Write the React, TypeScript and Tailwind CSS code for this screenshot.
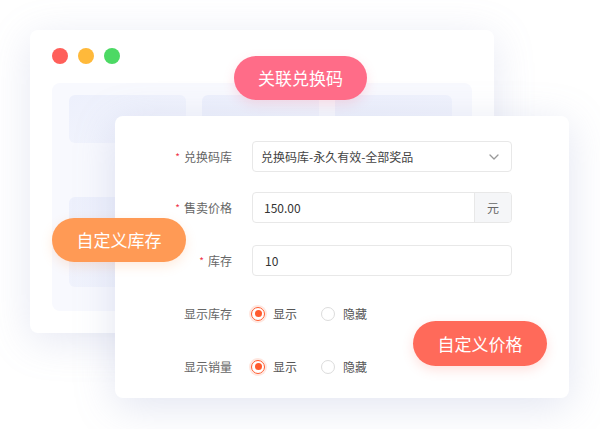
import React from "react";

const font = { fontFamily: '"Noto Sans CJK SC", "Noto Sans", sans-serif' };

function Label({ text, required }: { text: string; required?: boolean }) {
  return (
    <div className="w-[117px] shrink-0 flex items-center justify-end text-[12px] text-[#666] leading-none">
      {required && <span className="text-[#F0354B] mr-[4px] text-[10px]">*</span>}
      <span>{text}</span>
    </div>
  );
}

function Radio({ checked, text }: { checked?: boolean; text: string }) {
  return (
    <div className="flex items-center">
      {checked ? (
        <div className="w-[14px] h-[14px] rounded-full border-[1.5px] border-[#FF5B2E] flex items-center justify-center shadow-[0_0_0_2px_rgba(255,91,46,0.15)]">
          <div className="w-[7px] h-[7px] rounded-full bg-[#FF5B2E]" />
        </div>
      ) : (
        <div className="w-[14px] h-[14px] rounded-full border border-[#DCDCDC] bg-white" />
      )}
      <span className="ml-[8px] text-[12px] text-[#555] leading-none">{text}</span>
    </div>
  );
}

export default function App() {
  return (
    <div className="relative w-[600px] h-[429px] bg-white overflow-hidden" style={font}>
      {/* back window */}
      <div className="absolute left-[30px] top-[30px] w-[464px] h-[303px] rounded-[8px] bg-white shadow-[0_8px_40px_rgba(140,150,200,0.22)] flex flex-col">
        <div className="flex items-center gap-[10px] pl-[22px] pt-[18px]">
          <div className="w-[16px] h-[16px] rounded-full bg-[#FF5F5A]" />
          <div className="w-[16px] h-[16px] rounded-full bg-[#FFB93A]" />
          <div className="w-[16px] h-[16px] rounded-full bg-[#4CD964]" />
        </div>
        <div className="ml-[22px] mt-[19px] w-[420px] h-[228px] rounded-[8px] bg-[#F8F9FE] pt-[12px] pl-[17px] flex flex-col gap-[54px]">
          <div className="flex gap-[16px]">
            <div className="w-[117px] h-[48px] rounded-[6px] bg-gradient-to-br from-[#EDF0FC] to-[#F3F5FD]" />
            <div className="w-[117px] h-[48px] rounded-[6px] bg-gradient-to-br from-[#EDF0FC] to-[#F3F5FD]" />
            <div className="w-[117px] h-[48px] rounded-[6px] bg-gradient-to-br from-[#EDF0FC] to-[#F3F5FD]" />
          </div>
          <div className="flex gap-[16px]">
            <div className="w-[117px] h-[90px] rounded-[6px] bg-gradient-to-br from-[#EDF0FC] to-[#F3F5FD]" />
            <div className="w-[117px] h-[90px] rounded-[6px] bg-gradient-to-br from-[#EDF0FC] to-[#F3F5FD]" />
            <div className="w-[117px] h-[90px] rounded-[6px] bg-gradient-to-br from-[#EDF0FC] to-[#F3F5FD]" />
          </div>
        </div>
      </div>

      {/* front panel */}
      <div className="absolute left-[115px] top-[116px] w-[454px] h-[282px] rounded-[8px] bg-white shadow-[0_8px_40px_rgba(140,150,200,0.25)] pt-[25px] flex flex-col">
        <div className="flex h-[31px]">
          <Label text="兑换码库" required />
          <div className="ml-[20px] w-[260px] h-[31px] rounded-[4px] border border-[#E8E8E8] flex items-center justify-between pl-[8px] pr-[12px]">
            <span className="text-[12px] text-[#444] leading-none">兑换码库-永久有效-全部奖品</span>
            <svg width="10" height="6" viewBox="0 0 10 6" fill="none">
              <path d="M1 1l4 4 4-4" stroke="#999" strokeWidth="1.3" strokeLinecap="round" strokeLinejoin="round" />
            </svg>
          </div>
        </div>
        <div className="flex h-[31px] mt-[20px]">
          <Label text="售卖价格" required />
          <div className="ml-[20px] w-[260px] h-[31px] rounded-[4px] border border-[#E8E8E8] flex overflow-hidden">
            <div className="flex-1 flex items-center pl-[11px] text-[12px] text-[#333] leading-none">150.00</div>
            <div className="w-[37px] bg-[#F5F6F8] border-l border-[#E8E8E8] flex items-center justify-center text-[12px] text-[#666] leading-none">元</div>
          </div>
        </div>
        <div className="flex h-[31px] mt-[22px]">
          <Label text="库存" required />
          <div className="ml-[20px] w-[260px] h-[31px] rounded-[4px] border border-[#E8E8E8] flex items-center pl-[12px] text-[12px] text-[#333] leading-none">10</div>
        </div>
        <div className="flex h-[31px] mt-[22px]">
          <Label text="显示库存" />
          <div className="ml-[19px] flex items-center gap-[24px]">
            <Radio checked text="显示" />
            <Radio text="隐藏" />
          </div>
        </div>
        <div className="flex h-[31px] mt-[22px]">
          <Label text="显示销量" />
          <div className="ml-[19px] flex items-center gap-[24px]">
            <Radio checked text="显示" />
            <Radio text="隐藏" />
          </div>
        </div>
      </div>

      {/* pills */}
      <div className="absolute left-[234px] top-[56px] w-[133px] h-[44px] rounded-full bg-[#FF6C88] flex items-center justify-center text-white text-[17px] shadow-[0_4px_12px_rgba(255,108,136,0.2)]">
        关联兑换码
      </div>
      <div className="absolute left-[52px] top-[218px] w-[134px] h-[44px] rounded-full bg-[#FF9A55] flex items-center justify-center text-white text-[17px] shadow-[0_4px_12px_rgba(255,154,85,0.2)]">
        自定义库存
      </div>
      <div className="absolute left-[413px] top-[321px] w-[134px] h-[45px] rounded-full bg-[#FF6A5A] flex items-center justify-center text-white text-[17px] shadow-[0_4px_12px_rgba(255,106,90,0.2)]">
        自定义价格
      </div>
    </div>
  );
}
